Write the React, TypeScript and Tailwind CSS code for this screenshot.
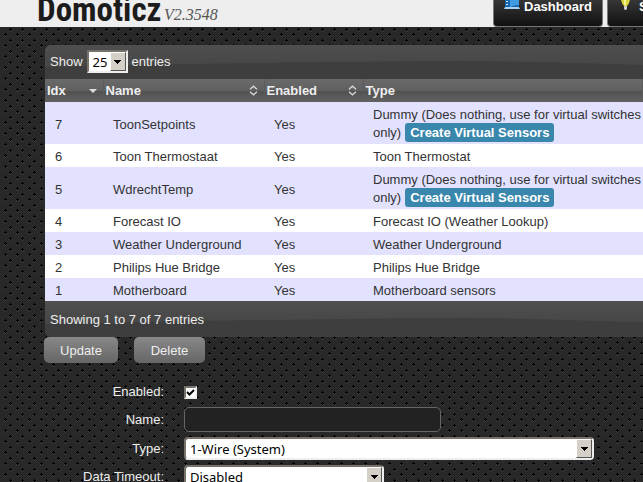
import { ReactNode } from 'react'

const rows = [
  { idx: 7, name: 'ToonSetpoints', type: 'Dummy (Does nothing, use for virtual switches only)', virtual: true },
  { idx: 6, name: 'Toon Thermostaat', type: 'Toon Thermostat' },
  { idx: 5, name: 'WdrechtTemp', type: 'Dummy (Does nothing, use for virtual switches only)', virtual: true },
  { idx: 4, name: 'Forecast IO', type: 'Forecast IO (Weather Lookup)' },
  { idx: 3, name: 'Weather Underground', type: 'Weather Underground' },
  { idx: 2, name: 'Philips Hue Bridge', type: 'Philips Hue Bridge' },
  { idx: 1, name: 'Motherboard', type: 'Motherboard sensors' },
]

function Mesh() {
  return (
    <svg className="absolute inset-0 -z-10 h-full w-full" aria-hidden="true">
      <defs>
        <pattern id="mesh" width="12" height="11" patternUnits="userSpaceOnUse">
          <rect width="12" height="11" fill="#282828" />
          <path d="M9 8h3v1H9zM10 9h1v1h-1zM4 2h3v1H4zM5 3h1v1H5z" fill="#404040" />
          <path d="M10 6h1v3h-1zM9 7h3v1H9zM5 0h1v3H5zM4 1h3v1H4z" fill="#000" />
        </pattern>
      </defs>
      <rect width="100%" height="100%" fill="url(#mesh)" />
    </svg>
  )
}

function SortIcon() {
  return (
    <svg width="9" height="11" viewBox="0 0 9 11" fill="none" stroke="#d8d8d8" strokeWidth="1.3" aria-hidden="true">
      <path d="M1 4.200l3.500-3L8 4.200M1 6.800l3.500 3L8 6.800" />
    </svg>
  )
}

function HeaderCell({ label, className, children }: { label: string; className: string; children?: ReactNode }) {
  return (
    <th className={`h-[23px] border-r border-[#5c5c5c] p-0 pl-[2px] text-left ${className}`}>
      <div className="flex items-center justify-between pr-1.5">
        {label}
        {children}
      </div>
    </th>
  )
}

function Arrow() {
  return (
    <span className="pointer-events-none absolute inset-y-[2px] right-[2px] flex w-[16px] items-center justify-center border border-t-white border-r-[#555] border-b-[#555] border-l-white bg-[#d4d0c8]">
      <svg width="7" height="4" aria-hidden="true">
        <path d="M0 0h7v1H0zM1 1h5v1H1zM2 2h3v1H2zM3 3h1v1H3z" />
      </svg>
    </span>
  )
}

function Picker({ id, value, className }: { id: string; value: string; className: string }) {
  return (
    <span className={`relative inline-block ${className}`}>
      <select
        id={id}
        className="block h-full w-full appearance-none rounded-[inherit] border-2 border-t-[#77736b] border-r-[#eee] border-b-[#eee] border-l-[#77736b] bg-white pl-1 font-['Noto_Sans',sans-serif] text-[13px] leading-4 text-black"
      >
        <option>{value}</option>
      </select>
      <Arrow />
    </span>
  )
}

function FormRow({ id, label, children }: { id: string; label: string; children: ReactNode }) {
  return (
    <div className="flex items-center">
      <label htmlFor={id} className="w-[164px] shrink-0 text-right leading-5">
        {label}
      </label>
      <div className="flex pl-5">{children}</div>
    </div>
  )
}

function Sheen({ id }: { id: string }) {
  return (
    <svg className="absolute inset-0 -z-10 h-full w-full" viewBox="0 0 600 34" preserveAspectRatio="none" aria-hidden="true">
      <defs>
        <linearGradient id={id} x2="0" y2="1">
          <stop stopColor="#4f4f4f" />
          <stop offset="1" stopColor="#464646" />
        </linearGradient>
      </defs>
      <rect width="600" height="34" fill="#3e3e3e" />
      <path d="M0 0h600v20Q460 16 420 16Q220 17 0 22z" fill={`url(#${id})`} />
    </svg>
  )
}

export default function App() {
  return (
    <div className="relative isolate min-h-screen overflow-hidden bg-[#282828] font-['Liberation_Sans',Arial,sans-serif] text-[13px] text-[#eee]">
      <Mesh />
      <header className="flex h-[27px] justify-between bg-[#eee]">
        <div className="flex items-end pl-[37px]">
          <span className="w-[127px] shrink-0 font-['Liberation_Sans_Narrow','Roboto_Condensed',Roboto,sans-serif] text-[33px] leading-[34px] font-bold text-[#1c1c1c]">
            Domoticz
          </span>
          <span className="font-['Liberation_Serif',serif] text-[16px] leading-6 text-[#555] italic">V2.3548</span>
        </div>
        <nav className="flex shrink-0 gap-1 overflow-hidden">
          <a
            href="#dashboard"
            className="flex w-[110px] items-start gap-1 rounded-b-sm border border-t-0 border-[#777] bg-linear-to-b from-[#363636] to-[#111] pl-[10px] font-bold text-white"
          >
            <svg className="shrink-0" width="16" height="11" aria-hidden="true">
              <path d="M1 0h14v8H1z" fill="#1565b0" />
              <path d="M6 0h9v5Q9 5 6 8z" fill="#3f9be0" />
              <path d="M2 1h2v1H2zM2 4h2v1H2z" fill="#cfeaff" />
              <path d="M1 7h14l1 2H0z" fill="#a9d2ee" />
            </svg>
            <span className="leading-[14px]">Dashboard</span>
          </a>
          <a
            href="#switches"
            className="flex w-[36px] items-start gap-2 overflow-hidden rounded-bl-sm border border-t-0 border-r-0 border-[#777] bg-linear-to-b from-[#363636] to-[#111] pl-3 font-bold whitespace-nowrap text-white"
          >
            <svg className="shrink-0" width="11" height="12" aria-hidden="true">
              <path d="M1 0h9Q9 4 7 6H4Q2 4 1 0z" fill="#d8d83c" />
              <path d="M4 0h2v5H4z" fill="#f4f490" />
              <path d="M4 6h3v3L6 10H5L4 9z" fill="#ccc" />
            </svg>
            <span className="leading-[14px]">Switches</span>
          </a>
        </nav>
      </header>

      <main className="pt-[18px] pl-11">
        <section className="ml-px overflow-hidden rounded-l-md">
          <div className="relative isolate flex h-[34px] items-center gap-1 pb-px pl-[5px]">
            <Sheen id="top-sheen" />
            <label htmlFor="length">Show</label>
            <Picker id="length" value="25" className="h-[23px] w-[41px]" />
            <span>entries</span>
          </div>
          <table className="w-full table-fixed border-collapse">
            <thead className="bg-[linear-gradient(#6a6a6a,#606060_50%,#505050_50%,#626262)] leading-[23px]">
              <tr>
                <HeaderCell label="Idx" className="w-[58px]">
                  <svg width="8" height="4" aria-hidden="true">
                    <path d="M0 0h8L4 4z" fill="#ddd" />
                  </svg>
                </HeaderCell>
                <HeaderCell label="Name" className="w-[161px]">
                  <SortIcon />
                </HeaderCell>
                <HeaderCell label="Enabled" className="w-[99px]">
                  <SortIcon />
                </HeaderCell>
                <HeaderCell label="Type" className="" />
              </tr>
            </thead>
            <tbody className="leading-[17px] text-[#333]">
              {rows.map((row) => (
                <tr key={row.idx} className="odd:bg-[#e2e2ff] even:bg-white">
                  <td className="pt-1 pb-0.5 pl-[10px]">{row.idx}</td>
                  <td className="pt-1 pb-0.5 pl-[10px]">{row.name}</td>
                  <td className="pt-1 pb-0.5 pl-[10px]">Yes</td>
                  <td className="pt-1 pb-0.5 pl-[10px]">
                    {row.type}
                    {row.virtual && (
                      <button className="ml-1 rounded-[3px] bg-[#3a87ad] px-[5px] py-px font-bold text-white">
                        Create Virtual Sensors
                      </button>
                    )}
                  </td>
                </tr>
              ))}
            </tbody>
          </table>
          <div className="relative isolate flex h-[36px] items-center pt-0.5 pl-[5px]">
            <Sheen id="bottom-sheen" />
            Showing 1 to 7 of 7 entries
          </div>
        </section>

        <div className="flex gap-4">
          <button className="h-[26px] w-[74px] rounded-[5px] bg-linear-to-b from-[#888] to-[#666] pt-0.5">Update</button>
          <button className="h-[26px] w-[71px] rounded-[5px] bg-linear-to-b from-[#888] to-[#666] pt-0.5">Delete</button>
        </div>
      </main>

      <form className="flex flex-col gap-[5px] pt-[19px]">
        <FormRow id="enabled" label="Enabled:">
          <span className="relative flex">
            <input
              id="enabled"
              type="checkbox"
              defaultChecked
              className="peer size-[13px] appearance-none border-2 border-t-[#77736b] border-r-[#eee] border-b-[#eee] border-l-[#77736b] bg-white"
            />
            <svg
              className="pointer-events-none absolute inset-0 hidden peer-checked:block"
              width="13"
              height="13"
              fill="none"
              stroke="#000"
              strokeWidth="2"
              aria-hidden="true"
            >
              <path d="M3 6l2.500 2.500L10 4" />
            </svg>
          </span>
        </FormRow>
        <FormRow id="name" label="Name:">
          <input id="name" type="text" className="h-[25px] w-[257px] rounded-[5px] border border-[#666] bg-[#222] px-1" />
        </FormRow>
        <FormRow id="type" label="Type:">
          <Picker id="type" value="1-Wire (System)" className="h-[23px] w-[410px] rounded" />
        </FormRow>
        <FormRow id="timeout" label="Data Timeout:">
          <Picker id="timeout" value="Disabled" className="h-[23px] w-[200px] rounded" />
        </FormRow>
      </form>
    </div>
  )
}
